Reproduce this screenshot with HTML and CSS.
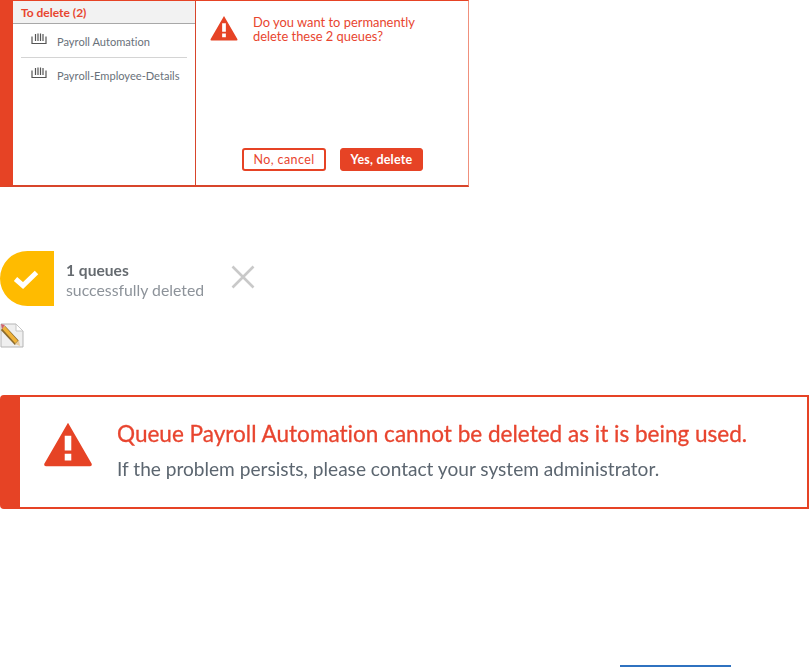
FILE: index.html
```html
<!DOCTYPE html>
<html lang="en">
<head>
<meta charset="utf-8">
<title>Delete queues</title>
<link rel="stylesheet" href="styles.css">
</head>
<body>
<section class="dialog">
  <div class="list-pane">
    <div class="list-head">To delete (2)</div>
    <div class="list-row">
      <svg class="queue-icon" viewBox="0 0 16 12"><path d="M1 3.500V10.500H15V3.500M4.500 1V8M7 .5V8M9.500 .5V8M12 1V8" fill="none" stroke="#555" stroke-width="1.200"/></svg>
      <span>Payroll Automation</span>
    </div>
    <div class="list-row list-row-last">
      <svg class="queue-icon" viewBox="0 0 16 12"><path d="M1 3.500V10.500H15V3.500M4.500 1V8M7 .5V8M9.500 .5V8M12 1V8" fill="none" stroke="#555" stroke-width="1.200"/></svg>
      <span>Payroll-Employee-Details</span>
    </div>
  </div>
  <div class="confirm-pane">
    <div class="confirm-msg">
      <svg class="warn-small" viewBox="0 0 30 28"><path fill-rule="evenodd" d="M15 1 29.500 26.200Q29.800 27.500 28.500 27.500H1.500Q.2 27.500.5 26.200ZM13 9V18H17V9ZM13 20V24H17V20Z" fill="#e64325"/></svg>
      <p>Do you want to permanently delete these 2 queues?</p>
    </div>
    <div class="confirm-actions">
      <button class="btn btn-outline">No, cancel</button>
      <button class="btn btn-solid">Yes, delete</button>
    </div>
  </div>
</section>

<section class="toast">
  <div class="toast-badge">
    <svg class="toast-check" viewBox="0 0 26 20"><path d="M2.500 10 10 16.500 23.500 3.500" fill="none" stroke="#fff" stroke-width="5"/></svg>
  </div>
  <div class="toast-text">
    <div class="toast-title">1 queues</div>
    <div class="toast-sub">successfully deleted</div>
  </div>
  <svg class="toast-close" viewBox="0 0 24 24"><path d="M1.500 1.500 22.500 22.500M22.500 1.500 1.500 22.500" stroke="#c9c9c9" stroke-width="2.600"/></svg>
</section>

<svg class="note-icon" viewBox="0 0 24 25">
  <path d="M1 1H16L23 8V24H1Z" fill="#efefef" stroke="#b5b5b5"/>
  <path d="M16 1V8H23Z" fill="#fff" stroke="#c5c5c5"/>
  <path d="M3 5 17 20" stroke="#8a6a2c" stroke-width="6"/>
  <path d="M3.500 4.500 16.500 19" stroke="#f0b33a" stroke-width="3.500"/>
  <path d="M1 1 5 2 2 6Z" fill="#d0606a"/>
  <path d="M15 21 20 23 19 17Z" fill="#e8cda0"/>
</svg>

<section class="banner">
  <svg class="warn-large" viewBox="0 0 30 28"><path fill-rule="evenodd" d="M15 1 29.500 26.200Q29.800 27.500 28.500 27.500H1.500Q.2 27.500.5 26.200ZM13 9V18H17V9ZM13 20V24H17V20Z" fill="#e64325"/></svg>
  <div class="banner-text">
    <div class="banner-title">Queue Payroll Automation cannot be deleted as it is being used.</div>
    <div class="banner-sub">If the problem persists, please contact your system administrator.</div>
  </div>
</section>

<div class="link-rule"></div>
</body>
</html>
```

FILE: styles.css
```css
* { box-sizing: border-box; }
html, body { margin: 0; padding: 0; height: 667px; overflow: hidden; background: #fff; }
body { font-family: Lato, "Open Sans", sans-serif; color: #5f6770; font-variant-ligatures: none; }

.dialog {
  display: flex;
  width: 469px;
  height: 187px;
  border-top: 1px solid #e64325;
  border-right: 1px solid #f0907c;
  border-bottom: 2px solid #d8452b;
  border-left: 13px solid #e64325;
}
.list-pane { width: 183px; border-right: 1px solid #d8452b; }
.list-head {
  height: 23px;
  padding: 4px 0 0 8px;
  background: #f2f2f2;
  border-bottom: 1px solid #a8a8a8;
  border-top: 1px solid #f2f2f2;
  color: #e8452f;
  font-size: 12px;
  font-weight: 700;
  line-height: 14px;
}
.list-row {
  display: flex;
  align-items: center;
  gap: 10px;
  height: 34px;
  margin: 0 8px;
  padding-left: 10px;
  border-bottom: 1px solid #d4d4d4;
  font-size: 11.100px;
  color: #69717a;
  white-space: nowrap;
}
.list-row span { padding-top: 2px; }
.list-row-last { border-bottom: 0; margin-right: 0; height: 32px; }
.queue-icon { width: 16px; height: 12px; flex: none; margin-top: -3px; }

.confirm-pane { flex: 1; display: flex; flex-direction: column; justify-content: space-between; }
.confirm-msg { display: flex; padding: 14px 0 0 14px; gap: 15px; }
.warn-small { width: 28px; height: 26px; flex: none; }
.confirm-msg p {
  margin: 0;
  width: 180px;
  color: #e8452f;
  font-size: 12.900px;
  line-height: 14px;
}
.confirm-actions { display: flex; gap: 14px; padding: 0 0 14px 46px; }
.btn {
  height: 23px;
  padding: 0;
  border: 1px solid #e64325;
  border-radius: 3px;
  font: 400 12.500px Lato, sans-serif;
  letter-spacing: .4px;
  font-variant-ligatures: none;
}
.btn-outline { width: 84px; border-width: 2px; background: #fff; color: #e8452f; }
.btn-solid { width: 83px; background: #e64325; color: #fff; font-weight: 700; letter-spacing: .2px; }

.toast {
  display: flex;
  align-items: center;
  width: 266px;
  height: 55px;
  margin-top: 64px;
  filter: blur(.4px);
}
.toast-badge {
  display: flex;
  align-items: center;
  justify-content: center;
  width: 54px;
  height: 55px;
  padding-right: 2px;
  background: #ffbb00;
  border-radius: 28px 0 0 28px;
}
.toast-check { width: 26px; height: 20px; }
.toast-text { margin-left: 12px; width: 166px; padding-top: 4px; }
.toast-title { font-size: 15.600px; font-weight: 700; line-height: 18px; color: #666b70; }
.toast-sub { font-size: 15.800px; line-height: 22px; color: #8d939a; }
.toast-close { width: 24px; height: 24px; margin: -4px 0 0 -1px; }

.note-icon { display: block; width: 24px; height: 25px; margin-top: 17px; filter: blur(.4px); }

.banner {
  display: flex;
  align-items: center;
  width: 809px;
  height: 114px;
  margin-top: 47px;
  padding-left: 23px;
  background: #fff;
  border: 2px solid #e64325;
  border-left-width: 20px;
  border-radius: 4px 0 0 4px;
}
.warn-large { width: 50px; height: 46px; flex: none; margin-bottom: 16px; }
.banner-text { margin-left: 24px; margin-top: -4px; filter: blur(.3px); }
.banner-title { color: #e8452f; font-size: 22.550px; line-height: 28px; white-space: nowrap; -webkit-text-stroke: .3px #e8452f; }
.banner-sub { margin-top: 10px; color: #5c6670; font-size: 19.100px; line-height: 22px; white-space: nowrap; }

.link-rule { width: 111px; height: 2px; margin: 156px 0 0 620px; background: #2f72c0; }
```
